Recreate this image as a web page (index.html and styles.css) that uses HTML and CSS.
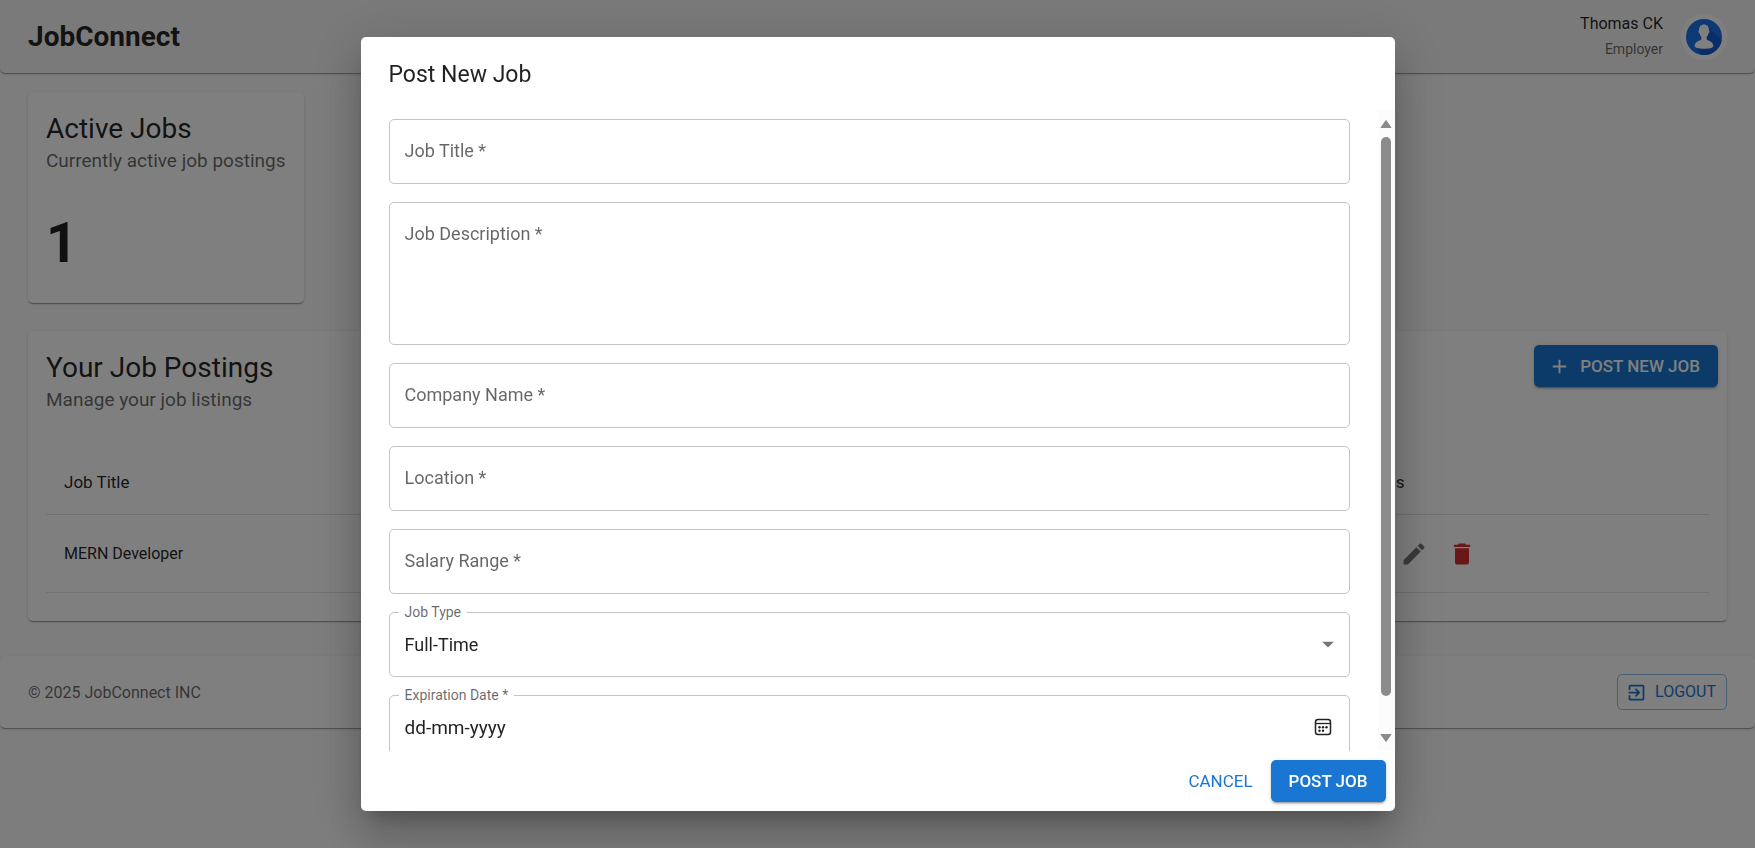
FILE: index.html
```html
<!DOCTYPE html>
<html lang="en">
<head>
<meta charset="utf-8">
<meta name="viewport" content="width=device-width, initial-scale=1">
<title>JobConnect</title>
<link rel="stylesheet" href="styles.css">
</head>
<body>
<header class="topbar paper">
  <h1 class="brand">JobConnect</h1>
  <div class="user">
    <div class="user-text">
      <span class="user-name">Thomas CK</span>
      <span class="user-role">Employer</span>
    </div>
    <svg class="avatar" viewBox="0 0 46 46" role="img" aria-label="Profile">
      <defs><clipPath id="disc"><circle cx="23" cy="23" r="18"/></clipPath></defs>
      <circle cx="23" cy="23" r="23" fill="#fff"/>
      <circle cx="23" cy="23" r="18" fill="#1a73e8"/>
      <path clip-path="url(#disc)" fill="#1558d0" d="M26 12L46 32V46H24L15 34Z"/>
      <path fill="#fff" d="M23 10.500c3.200 0 5 2.300 5 5.700 0 .5.600.6.500 1.600-.1.900-.6 1.600-1.100 1.800-.3 1.500-.9 2.500-1.700 3.200v2.400c.5 1.500 6.600 1.600 6.600 7 0 1.700-4 2.500-9.300 2.500s-9.300-.8-9.300-2.500c0-5.400 6.100-5.500 6.600-7v-2.400c-.8-.7-1.400-1.700-1.700-3.200-.5-.2-1-.9-1.100-1.800-.1-1 .5-1.100.5-1.600 0-3.400 1.800-5.700 5-5.700z"/>
    </svg>
  </div>
</header>

<main class="content">
  <section class="card paper stat">
    <div class="card-head">
      <div>
        <h2 class="card-title">Active Jobs</h2>
        <p class="card-sub">Currently active job postings</p>
      </div>
    </div>
    <div class="card-body"><p class="stat-value">1</p></div>
  </section>

  <section class="card paper">
    <div class="card-head">
      <div>
        <h2 class="card-title">Your Job Postings</h2>
        <p class="card-sub">Manage your job listings</p>
      </div>
      <button class="btn btn-filled add-btn" type="button">
        <svg class="icon-23" viewBox="0 0 24 24" aria-hidden="true"><path d="M19 13h-6v6h-2v-6H5v-2h6V5h2v6h6v2z"/></svg>
        POST NEW JOB
      </button>
    </div>
    <div class="card-body">
      <table class="jobs">
        <thead>
          <tr><th scope="col">Job Title</th><th class="col-actions" scope="col">Actions</th></tr>
        </thead>
        <tbody>
          <tr>
            <td>MERN Developer</td>
            <td>
              <div class="row-actions">
                <button class="icon-btn" type="button" aria-label="View"><svg class="icon-28" viewBox="0 0 24 24" aria-hidden="true"><path d="M12 4.500C7 4.500 2.730 7.610 1 12c1.730 4.390 6 7.500 11 7.500s9.270-3.110 11-7.500c-1.730-4.390-6-7.500-11-7.500zM12 17c-2.760 0-5-2.240-5-5s2.240-5 5-5 5 2.240 5 5-2.240 5-5 5zm0-8c-1.660 0-3 1.340-3 3s1.340 3 3 3 3-1.340 3-3-1.340-3-3-3z"/></svg></button>
                <button class="icon-btn" type="button" aria-label="Edit"><svg class="icon-28" viewBox="0 0 24 24" aria-hidden="true"><path d="M3 17.250V21h3.750L17.810 9.940l-3.750-3.750L3 17.250zM20.710 7.040c.39-.39.39-1.020 0-1.410l-2.340-2.340a.996.996 0 0 0-1.410 0l-1.830 1.830 3.750 3.750 1.830-1.830z"/></svg></button>
                <button class="icon-btn danger" type="button" aria-label="Delete"><svg class="icon-28" viewBox="0 0 24 24" aria-hidden="true"><path d="M6 19c0 1.100.9 2 2 2h8c1.100 0 2-.9 2-2V7H6v12zM19 4h-3.500l-1-1h-5l-1 1H5v2h14V4z"/></svg></button>
              </div>
            </td>
          </tr>
        </tbody>
      </table>
    </div>
  </section>
</main>

<footer class="footer paper">
  <span>© 2025 JobConnect INC</span>
  <button class="btn-outlined" type="button">
    <svg class="icon-21" viewBox="0 0 24 24" aria-hidden="true"><path d="M10.090 15.590L11.500 17l5-5-5-5-1.410 1.410L12.670 11H3v2h9.670l-2.580 2.590zM19 3H5c-1.110 0-2 .9-2 2v4h2V5h14v14H5v-4H3v4c0 1.100.89 2 2 2h14c1.100 0 2-.9 2-2V5c0-1.100-.9-2-2-2z"/></svg>
    LOGOUT
  </button>
</footer>

<div class="backdrop">
  <form class="dialog" role="dialog" aria-modal="true" aria-labelledby="dialog-title">
    <h2 class="dialog-title" id="dialog-title">Post New Job</h2>
    <div class="dialog-scroll">
      <div class="fields">
        <div class="field">
          <label for="job-title">Job Title *</label>
          <input id="job-title" type="text">
        </div>
        <div class="field">
          <label for="job-desc">Job Description *</label>
          <textarea id="job-desc"></textarea>
        </div>
        <div class="field">
          <label for="company">Company Name *</label>
          <input id="company" type="text">
        </div>
        <div class="field">
          <label for="location">Location *</label>
          <input id="location" type="text">
        </div>
        <div class="field">
          <label for="salary">Salary Range *</label>
          <input id="salary" type="text">
        </div>
        <div class="field floated">
          <label for="job-type">Job Type</label>
          <select id="job-type"><option>Full-Time</option></select>
          <svg class="caret" viewBox="0 0 24 24" aria-hidden="true"><path d="M7 10l5 5 5-5z"/></svg>
        </div>
        <div class="field floated">
          <label for="expiry">Expiration Date *</label>
          <input class="date" id="expiry" type="text" placeholder="dd-mm-yyyy">
          <button class="calendar" type="button" aria-label="Choose date">
            <svg viewBox="0 0 18 18" aria-hidden="true">
              <rect x="1.500" y="1.500" width="15" height="15" rx="2.500" fill="none" stroke="#222" stroke-width="1.500"/>
              <path d="M1.500 5.500h15" stroke="#222" stroke-width="1.300"/>
              <g fill="#222"><circle cx="5.500" cy="9.300" r="1.200"/><circle cx="9" cy="9.300" r="1.200"/><circle cx="12.500" cy="9.300" r="1.200"/><circle cx="5.500" cy="12.800" r="1.200"/><circle cx="9" cy="12.800" r="1.200"/></g>
            </svg>
          </button>
        </div>
      </div>
      <div class="scrollbar" aria-hidden="true">
        <svg class="arrow" viewBox="0 0 12 10"><path d="M6 1.500L11 8.500H1Z" stroke="currentColor" stroke-linejoin="round"/></svg>
        <div class="track"><div class="thumb"></div></div>
        <svg class="arrow" viewBox="0 0 12 10"><path d="M6 8.500L11 1.500H1Z" stroke="currentColor" stroke-linejoin="round"/></svg>
      </div>
    </div>
    <div class="dialog-actions">
      <button class="btn btn-text" type="button">CANCEL</button>
      <button class="btn btn-filled" type="submit">POST JOB</button>
    </div>
  </form>
</div>
</body>
</html>
```
FILE: styles.css
```css
:root {
  --ink: rgba(0, 0, 0, 0.87);
  --muted: rgba(0, 0, 0, 0.6);
  --primary: #1976d2;
}

* { box-sizing: border-box; }

body {
  margin: 0;
  min-height: 100vh;
  background: #fafafa;
  color: var(--ink);
  font-family: Roboto, "Liberation Sans", sans-serif;
  font-size: 16px;
  line-height: 23px;
}

h1, h2, p { margin: 0; font-weight: 400; }

button, input, select, textarea { font: inherit; color: inherit; }
button { cursor: pointer; }
svg { display: block; fill: currentColor; flex: none; }

.icon-21 { width: 21px; height: 21px; }
.icon-23 { width: 23px; height: 23px; }
.icon-28 { width: 28px; height: 28px; }

.paper {
  background: #fff;
  border-radius: 5px;
  box-shadow: 0 2px 1px -1px rgba(0, 0, 0, 0.2), 0 1px 1px rgba(0, 0, 0, 0.14), 0 1px 3px rgba(0, 0, 0, 0.12);
}

/* Header */
.topbar {
  display: flex;
  align-items: center;
  justify-content: space-between;
  padding: 12px 28px;
  background: #f5f5f5;
}
.brand { font-size: 28px; line-height: 36px; font-weight: 700; }
.user { display: flex; align-items: center; gap: 18px; }
.user-text { display: flex; flex-direction: column; align-items: flex-end; gap: 3px; }
.user-role { font-size: 14px; color: var(--muted); }
.avatar { width: 46px; height: 46px; }

/* Cards */
.content {
  display: flex;
  flex-direction: column;
  gap: 28px;
  padding: 19px 28px 35px;
}
.stat { align-self: flex-start; }
.card-head {
  display: flex;
  align-items: flex-start;
  justify-content: space-between;
  padding: 18px;
}
.card-title { font-size: 28px; line-height: 37px; }
.card-sub { font-size: 19px; line-height: 28px; color: var(--muted); }
.card-body { padding: 18px 18px 28px; }
.stat-value { font-size: 55px; line-height: 64px; font-weight: 700; }
.add-btn { margin: -4px -9px 0 0; }

/* Buttons */
.btn {
  display: inline-flex;
  align-items: center;
  gap: 9px;
  padding: 9px 18px;
  border: 0;
  border-radius: 5px;
  font-size: 17px;
  font-weight: 500;
  line-height: 24px;
}
.btn-filled {
  background: var(--primary);
  color: #fff;
  box-shadow: 0 3px 1px -2px rgba(0, 0, 0, 0.2), 0 2px 2px rgba(0, 0, 0, 0.14), 0 1px 5px rgba(0, 0, 0, 0.12);
}
.btn.add-btn { padding-left: 14px; }
.btn-text { padding: 9px; background: none; color: var(--primary); font-weight: 400; }
.btn-outlined {
  display: inline-flex;
  align-items: center;
  gap: 8px;
  padding: 5px 10px 5px 8px;
  border: 1px solid rgba(25, 118, 210, 0.5);
  border-radius: 5px;
  background: none;
  color: var(--primary);
  line-height: 24px;
}

/* Job table */
.jobs { width: 100%; border-collapse: collapse; }
.jobs th, .jobs td {
  padding: 18px;
  border-bottom: 1px solid #e0e0e0;
  text-align: left;
}
.jobs th { font-size: 17px; font-weight: 400; line-height: 28px; }
.jobs td { height: 78px; }
.col-actions { width: 380px; }
.row-actions { display: flex; gap: 10px; }
.icon-btn {
  padding: 5px;
  border: 0;
  border-radius: 50%;
  background: none;
  color: rgba(0, 0, 0, 0.54);
}
.icon-btn.danger { color: #d32f2f; }

/* Footer */
.footer {
  display: flex;
  align-items: center;
  justify-content: space-between;
  padding: 18px 28px;
  color: var(--muted);
}

/* Dialog */
.backdrop {
  position: fixed;
  inset: 0;
  display: flex;
  align-items: center;
  justify-content: center;
  padding: 37px;
  background: rgba(0, 0, 0, 0.5);
}
.dialog {
  display: flex;
  flex-direction: column;
  width: 100%;
  max-width: 1034px;
  max-height: 100%;
  border-radius: 5px;
  background: #fff;
  box-shadow: 0 13px 17px -8px rgba(0, 0, 0, 0.2), 0 28px 44px 3px rgba(0, 0, 0, 0.14), 0 10px 53px 9px rgba(0, 0, 0, 0.12);
}
.dialog-title { padding: 19px 28px 17px; font-size: 23px; line-height: 37px; }
.dialog-scroll { display: flex; min-height: 0; overflow: hidden; }
.fields {
  flex: 1;
  display: flex;
  flex-direction: column;
  gap: 18px;
  padding: 9px 28px 23px;
}
.dialog-actions {
  display: flex;
  justify-content: flex-end;
  gap: 9px;
  padding: 9px;
}

/* Outlined form fields */
.field { position: relative; flex: none; display: flex; font-size: 18px; line-height: 27px; }
.field input, .field select, .field textarea {
  flex: 1;
  min-width: 0;
  height: 65px;
  padding: 18px 15px;
  border: 1px solid #c4c4c4;
  border-radius: 5px;
  background: none;
  appearance: none;
  outline: 0;
}
.field textarea { height: 143px; resize: none; }
.field .date { font-size: 19px; }
.field input::placeholder { color: var(--ink); opacity: 1; }
.field label {
  position: absolute;
  top: 18px;
  left: 16px;
  color: var(--muted);
  pointer-events: none;
}
.floated label {
  top: -10px;
  left: 10px;
  padding: 0 6px;
  background: #fff;
  font-size: 14px;
  line-height: 20px;
}
.caret {
  position: absolute;
  top: 18px;
  right: 8px;
  width: 28px;
  height: 28px;
  color: rgba(0, 0, 0, 0.54);
  pointer-events: none;
}
.calendar {
  position: absolute;
  top: 23px;
  right: 18px;
  padding: 0;
  border: 0;
  background: none;
}
.calendar svg { width: 18px; height: 18px; }

/* Scrollbar */
.scrollbar {
  display: flex;
  flex-direction: column;
  align-items: center;
  gap: 8px;
  width: 17px;
  padding: 9px 0 8px;
  background: #fcfcfc;
  color: #8b8b8b;
}
.arrow { width: 12px; height: 10px; }
.track { flex: 1; width: 10px; }
.thumb { height: 95%; border-radius: 5px; background: #8b8b8b; }
```
